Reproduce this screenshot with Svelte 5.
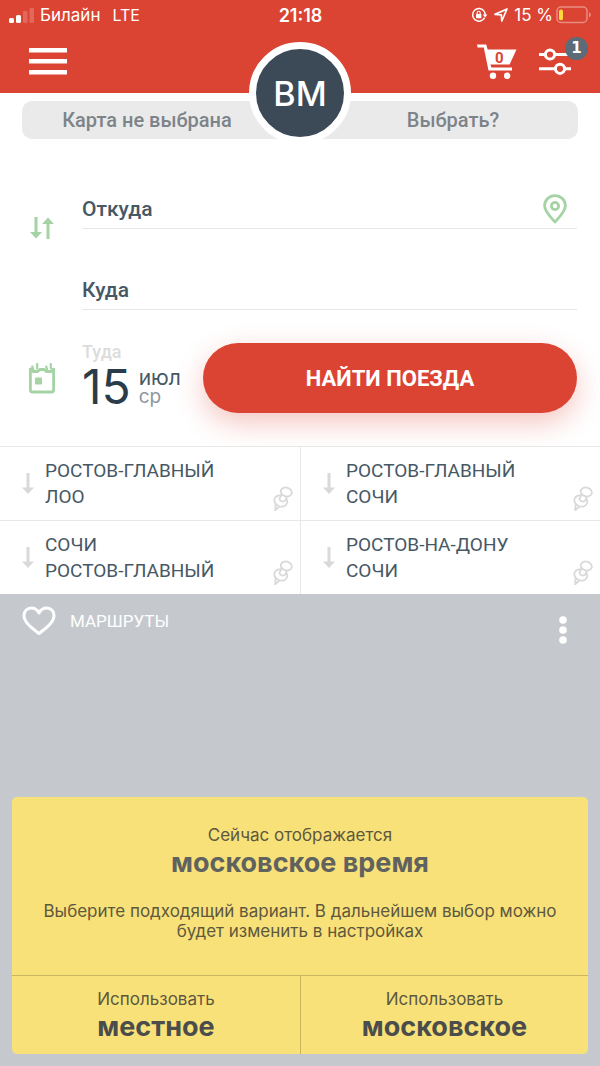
<script lang="ts">
	interface Route {
		from: string;
		to: string;
	}

	const routes: Route[] = [
		{ from: 'РОСТОВ-ГЛАВНЫЙ', to: 'ЛОО' },
		{ from: 'РОСТОВ-ГЛАВНЫЙ', to: 'СОЧИ' },
		{ from: 'СОЧИ', to: 'РОСТОВ-ГЛАВНЫЙ' },
		{ from: 'РОСТОВ-НА-ДОНУ', to: 'СОЧИ' }
	];

	let from = $state('');
	let to = $state('');

	function swap() {
		[from, to] = [to, from];
	}

	function pick(route: Route) {
		from = route.from;
		to = route.to;
	}
</script>

<div class="app">
	<header>
		<div class="status">
			<div class="carrier">
				<svg width="25" height="15" viewBox="0 0 25 15" fill="#fff">
					<rect x="0" y="10" width="5" height="5" rx="1.5" />
					<rect x="7" y="7" width="5" height="8" rx="1.5" />
					<rect x="14" y="3" width="4.500" height="12" rx="1" opacity="0.2" />
					<rect x="20.500" y="0" width="4.500" height="15" rx="1" opacity="0.2" />
				</svg>
				<span>Билайн</span>
				<span class="network">LTE</span>
			</div>
			<time class="clock">21:18</time>
			<div class="power">
				<svg width="17" height="16" viewBox="0 0 17 16" fill="none" stroke="#fff" stroke-width="1.5">
					<path d="M13.2 4.4A6.3 6.3 0 1 0 13.6 10.6" />
					<path d="M13.2 4.4Q14.2 6 14.1 8" />
					<path d="M11.8 7.4h4.6l-2.3 3.2z" fill="#fff" stroke="none" />
					<rect x="5" y="7" width="5.4" height="4.2" rx="0.6" fill="#fff" stroke="none" />
					<path d="M6.2 7V5.7a1.5 1.5 0 0 1 3 0V7" stroke-width="1.1" />
				</svg>
				<svg width="14" height="14" viewBox="0 0 14 14" fill="none" stroke="#fff" stroke-width="1.7" stroke-linejoin="round">
					<path d="M1 6.4L13 1 7.8 13 7.3 6.8z" />
				</svg>
				<span>15 %</span>
				<svg class="battery" width="36" height="18" viewBox="0 0 36 18" fill="none">
					<rect x="1" y="1" width="30" height="15.5" rx="4" stroke="#fff" stroke-opacity="0.4" stroke-width="1.5" />
					<rect x="3" y="3.4" width="4" height="10.8" rx="1.8" fill="#ffd83d" />
					<path d="M33 6.2q2 1 2 2.6t-2 2.6z" fill="#fff" fill-opacity="0.4" />
				</svg>
			</div>
		</div>

		<div class="toolbar">
			<button type="button" class="icon-btn" aria-label="Меню">
				<svg width="38" height="28" viewBox="0 0 38 28" fill="#fff">
					<rect width="38" height="4.500" y="0" />
					<rect width="38" height="4.500" y="11" />
					<rect width="38" height="4.500" y="22" />
				</svg>
			</button>
			<div class="tools">
				<button type="button" class="icon-btn" aria-label="Корзина">
					<svg width="40" height="36" viewBox="0 0 40 36" fill="#fff">
						<path d="M0 0.5h9.200l1.500 5H39.500L32.6 20.6H13.4l1 2.800H35v3H11.500L6.800 3.400H0.6z" />
						<circle cx="16" cy="31.800" r="3.200" />
						<circle cx="30.2" cy="31.800" r="3.200" />
					</svg>
					<span class="count">0</span>
				</button>
				<button type="button" class="icon-btn" aria-label="Фильтры">
					<svg width="32" height="27" viewBox="0 0 32 27" fill="none" stroke="#fff" stroke-width="3">
						<path d="M0 6.5h6M16 6.5h16M0 20.8h16M26 20.8h6" />
						<circle cx="11" cy="6.5" r="4.6" />
						<circle cx="21" cy="20.8" r="4.6" />
					</svg>
					<span class="badge">1</span>
				</button>
			</div>
		</div>
		<button type="button" class="avatar">ВМ</button>
	</header>

	<main>
		<div class="card-strip">
			<button type="button">Карта не выбрана</button>
			<button type="button">Выбрать?</button>
		</div>

		<form class="search" onsubmit={(e) => e.preventDefault()}>
			<div class="stations">
				<button type="button" class="icon-btn swap" aria-label="Поменять местами" onclick={swap}>
					<svg width="24" height="22" viewBox="0 0 24 22" fill="#a5d3a4">
						<path d="M4.500 0h3v15H12L6 21.5 0 15h4.500z" />
						<path d="M16.500 22h3V7H24L18 0.5 12 7h4.500z" />
					</svg>
				</button>
				<div class="fields">
					<div class="field">
						<input type="text" aria-label="Откуда" placeholder="Откуда" bind:value={from} />
						<button type="button" class="icon-btn" aria-label="Моё местоположение">
							<svg width="24" height="30" viewBox="0 0 24 30" fill="none" stroke="#a5d3a4" stroke-width="2.8">
								<path d="M12 28C8 23.5 1.6 17.6 1.6 11.8a10.4 10.2 0 0 1 20.8 0C22.4 17.6 16 23.5 12 28z" stroke-linejoin="round" />
								<circle cx="12" cy="12" r="3.600" />
							</svg>
						</button>
					</div>
					<div class="field">
						<input type="text" aria-label="Куда" placeholder="Куда" bind:value={to} />
					</div>
				</div>
			</div>

			<div class="departure">
				<svg class="calendar" width="28" height="31" viewBox="0 0 28 31" fill="none" stroke="#a5d3a4" stroke-width="2.8">
					<path d="M2.4 5V27.200a1.800 1.800 0 0 0 1.800 1.800H23.800a1.800 1.800 0 0 0 1.800-1.800V5" />
					<path d="M1.500 5.500L5 8.500H9.500L12 6.500H16L18.500 8.500H23L26.500 5.500" />
					<path d="M4.200 3.500L5.500 7M9.200 1V5.500M18.200 3.500L19.200 7M22.800 1V5.500" stroke-width="2.200" stroke-linecap="round" />
					<rect x="7" y="14.500" width="7" height="7" rx="1" fill="#a5d3a4" stroke="none" />
				</svg>
				<button type="button" class="date">
					<span class="caption">Туда</span>
					<span class="value">
						<span class="day">15</span>
						<span class="rest">
							<span class="month">июл</span>
							<span class="weekday">ср</span>
						</span>
					</span>
				</button>
				<button type="submit" class="submit">НАЙТИ ПОЕЗДА</button>
			</div>
		</form>

		<ul class="recent">
			{#each routes as route}
				<li>
					<button type="button" class="route" onclick={() => pick(route)}>
						<svg width="12" height="22" viewBox="0 0 12 22" fill="#d9d9d9">
							<path d="M4.500 0h3v14.500H12L6 21 0 14.500h4.500z" />
						</svg>
						<span class="names">
							<span>{route.from}</span>
							<span>{route.to}</span>
						</span>
					</button>
					<button type="button" class="icon-btn pin" aria-label="Закрепить">
						<svg width="20" height="26" viewBox="0 0 20 26" fill="#fff" stroke="#d9d9d9" stroke-width="1.8" stroke-linejoin="round">
							<path d="M2.600 18L2.200 24.200 7 20z" />
							<ellipse cx="7.800" cy="15" rx="6.600" ry="5.400" transform="rotate(22 7.800 15)" />
							<path d="M8.600 8.500L6.400 12.800C6.800 15.800 10.800 16.400 12.400 14.200L14 10.200" />
							<ellipse cx="13.300" cy="6" rx="5.600" ry="4.400" transform="rotate(18 13.300 6)" />
						</svg>
					</button>
				</li>
			{/each}
		</ul>
	</main>

	<section class="bottom">
		<div class="routes-bar">
			<h2>
				<svg width="34" height="30" viewBox="0 0 34 30" fill="none" stroke="#fff" stroke-width="3" stroke-linejoin="round">
					<path d="M17 27.500C10 22 2 16.500 2 9.500 2 5 5.300 2 9.200 2c3.500 0 6.300 2 7.800 5 1.500-3 4.300-5 7.800-5C28.700 2 32 5 32 9.500c0 7-8 12.500-15 18z" />
				</svg>
				МАРШРУТЫ
			</h2>
			<button type="button" class="icon-btn" aria-label="Ещё">
				<svg width="8" height="28" viewBox="0 0 8 28" fill="#fff">
					<circle cx="4" cy="4" r="3.800" />
					<circle cx="4" cy="14" r="3.800" />
					<circle cx="4" cy="24" r="3.800" />
				</svg>
			</button>
		</div>

		<div class="notice">
			<div class="message">
				<p>Сейчас отображается</p>
				<strong>московское время</strong>
				<p class="hint">Выберите подходящий вариант. В дальнейшем выбор можно будет изменить в настройках</p>
			</div>
			<div class="actions">
				<button type="button">Использовать <strong>местное</strong></button>
				<button type="button">Использовать <strong>московское</strong></button>
			</div>
		</div>
	</section>
</div>

<style>
	:global(body) {
		background: #c5c8cd;
	}

	.app {
		--red: #db4332;
		--slate: #475865;
		--line: #e8e8e8;
		display: flex;
		flex-direction: column;
		min-height: 100vh;
		font-family: Roboto, 'Open Sans', sans-serif;
		color: var(--slate);
	}

	button {
		padding: 0;
		border: none;
		background: transparent;
		font: inherit;
		color: inherit;
		cursor: pointer;
	}

	svg {
		display: block;
		flex-shrink: 0;
	}

	.icon-btn {
		display: flex;
		position: relative;
	}

	header {
		position: relative;
		background: var(--red);
		color: #fff;
	}

	.status {
		display: grid;
		grid-template-columns: 1fr auto 1fr;
		align-items: center;
		height: 30px;
		padding: 0 8px 0 9px;
		font-family: Inter, sans-serif;
		font-size: 17px;
	}

	.carrier,
	.power {
		display: flex;
		align-items: center;
		gap: 6px;
	}

	.network {
		margin-left: 6px;
		font-size: 16px;
	}

	.clock {
		font-size: 18px;
		font-weight: 600;
	}

	.power {
		justify-content: flex-end;
		font-size: 17px;
	}

	.battery {
		margin-left: -3px;
	}

	.toolbar {
		display: flex;
		justify-content: space-between;
		align-items: center;
		height: 63px;
		padding: 0 29px;
		box-sizing: border-box;
	}

	.tools {
		display: flex;
		align-items: center;
		gap: 22px;
	}

	.count {
		position: absolute;
		top: 6px;
		left: 18px;
		font-size: 15px;
		line-height: 16px;
		font-weight: 700;
		color: var(--red);
	}

	.badge {
		position: absolute;
		top: -11px;
		right: -17px;
		width: 23px;
		height: 23px;
		border-radius: 50%;
		background: #5b6b77;
		font-family: 'DejaVu Sans', sans-serif;
		font-size: 15px;
		line-height: 22px;
		font-weight: 700;
	}

	.avatar {
		position: absolute;
		left: 50%;
		bottom: -51px;
		z-index: 1;
		width: 102px;
		height: 102px;
		transform: translateX(-50%);
		border: 7px solid #fff;
		border-radius: 50%;
		background: #3c4a57;
		font-family: Inter, sans-serif;
		font-size: 34px;
		font-weight: 500;
	}

	main {
		background: #fff;
	}

	.card-strip {
		display: grid;
		grid-template-columns: 1fr 1fr;
		gap: 56px;
		height: 38px;
		margin: 8px 22px 0;
		border-radius: 10px;
		background: #eaeaea;
		font-size: 20px;
		font-weight: 500;
		color: #7d8489;
	}

	.search {
		padding: 51px 23px 33px 22px;
	}

	.stations {
		display: flex;
		align-items: center;
	}

	.swap {
		justify-content: center;
		width: 40px;
		margin: 0 20px 44px 0;
	}

	.fields {
		flex: 1;
	}

	.field {
		display: flex;
		align-items: center;
		height: 38px;
		border-bottom: 1px solid #e6e6e6;
	}

	.field + .field {
		margin-top: 42px;
	}

	.field .icon-btn {
		margin-right: 10px;
	}

	input {
		flex: 1;
		min-width: 0;
		padding: 0;
		border: none;
		outline: none;
		background: transparent;
		font: inherit;
		font-size: 21px;
		font-weight: 500;
		color: var(--slate);
	}

	input::placeholder {
		color: var(--slate);
		opacity: 1;
	}

	.departure {
		display: flex;
		align-items: center;
		margin-top: 33px;
	}

	.calendar {
		margin: 0 26px 0 6px;
	}

	.date {
		width: 102px;
		margin-right: 19px;
		font-family: Inter, sans-serif;
		text-align: left;
	}

	.caption {
		display: block;
		font-family: Roboto, sans-serif;
		font-size: 18px;
		line-height: 18px;
		font-weight: 500;
		color: #dcdcdc;
	}

	.value {
		display: flex;
		align-items: center;
		gap: 8px;
	}

	.day {
		font-size: 48px;
		line-height: 52px;
		color: #2a3c4a;
	}

	.rest {
		display: flex;
		flex-direction: column;
		font-size: 19px;
		line-height: 19px;
	}

	.month {
		font-size: 21px;
	}

	.weekday {
		color: #8f979d;
	}

	.submit {
		flex: 1;
		height: 70px;
		border-radius: 35px;
		background: var(--red);
		box-shadow: 0 10px 28px rgba(219, 67, 50, 0.3);
		font-size: 22px;
		font-weight: 700;
		color: #fff;
	}

	.recent {
		display: grid;
		grid-template-columns: 1fr 1fr;
		position: relative;
		margin: 0;
		padding: 0;
		list-style: none;
		background: #fff;
	}

	.recent li {
		display: flex;
		align-items: flex-end;
		border-top: 1px solid var(--line);
	}

	.recent li:nth-child(even) {
		border-left: 1px solid var(--line);
	}

	.route {
		display: flex;
		flex: 1;
		align-items: center;
		gap: 11px;
		padding: 11px 0 10px 22px;
		text-align: left;
	}

	.names {
		display: flex;
		flex-direction: column;
		font-size: 19px;
		line-height: 26px;
	}

	.pin {
		margin: 0 7px 8px 0;
	}

	.bottom {
		display: flex;
		flex: 1;
		flex-direction: column;
		justify-content: space-between;
		padding: 12px;
		background: #c5c8cd;
	}

	.routes-bar {
		display: flex;
		justify-content: space-between;
		align-items: flex-start;
		padding: 0 21px 0 10px;
	}

	.routes-bar .icon-btn {
		margin-top: 10px;
	}

	h2 {
		display: flex;
		align-items: center;
		gap: 14px;
		margin: 0;
		font-size: 17px;
		font-weight: 400;
		color: #fff;
	}

	.notice {
		border-radius: 5px;
		background: #f8e178;
		font-family: Inter, sans-serif;
		font-size: 17px;
		line-height: 20px;
		color: #5e583f;
		text-align: center;
	}

	.message {
		padding: 28px 20px 34px;
	}

	.message p {
		margin: 0;
	}

	.message .hint {
		margin-top: 20px;
	}

	strong {
		display: block;
		font-size: 27px;
		line-height: 36px;
		font-weight: 700;
		color: #5f625f;
	}

	.actions {
		display: grid;
		grid-template-columns: 1fr 1fr;
		border-top: 1px solid #c9b55f;
	}

	.actions button {
		padding: 13px 0 9px;
	}

	.actions button + button {
		border-left: 1px solid #c9b55f;
	}

	.actions strong {
		color: #4a4d4b;
	}
</style>
